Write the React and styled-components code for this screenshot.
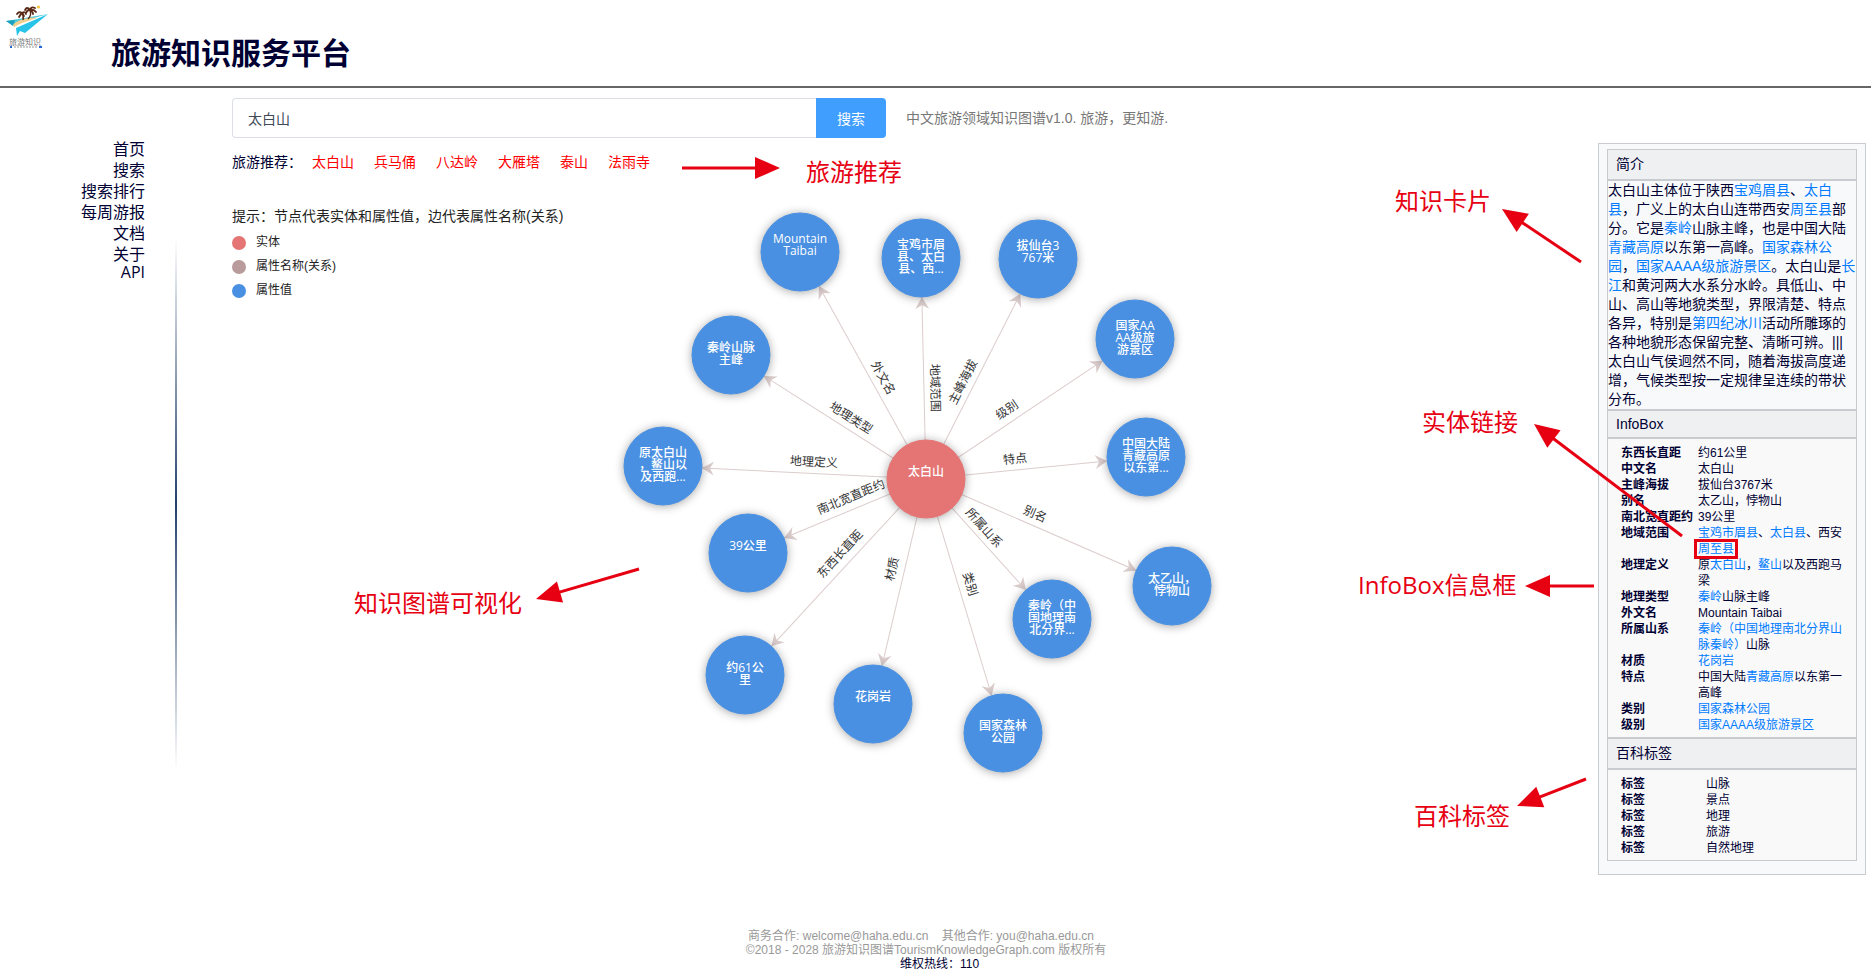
import React from "react";
import styled, { createGlobalStyle, css } from "styled-components";

const ink = "#000033";
const red = "#e60012";
const blue = "#4990e2";
const rose = "#b99b9b";
const coral = "#e57474";
const latinUi = '"Open Sans", "Noto Sans CJK SC", sans-serif';

const GlobalStyle = createGlobalStyle`
  * { box-sizing: border-box; }
  body {
    margin: 0;
    background: #fff;
    color: ${ink};
    font-family: "Liberation Sans", "Noto Sans CJK SC", sans-serif;
    font-size: 14px;
    text-spacing-trim: space-all;
  }
  a { text-decoration: none; }
`;

/* ---------- header ---------- */

const Header = styled.header`
  display: flex;
  align-items: flex-start;
  height: 88px;
  border-bottom: 2px solid #666;
`;

const LogoMark = styled.svg`
  flex: none;
  width: 52px;
  height: 52px;
`;

const LogoText = styled.text`
  font-family: "Noto Sans CJK SC", sans-serif;
  font-size: 8px;
  fill: #777;
`;

const Title = styled.h1`
  margin: 34px 0 0 59px;
  font-size: 30px;
  line-height: 40px;
  font-weight: 700;
`;

function Logo() {
  return (
    <LogoMark viewBox="0 0 52 52" role="img" aria-label="旅游知识">
      <path d="M6 21 L48 14 L27 20 L14 26 Z" fill="#4fc9dd" />
      <path d="M6 21 L15 20 L13 26 Z" fill="#1d9fbe" />
      <path d="M13 25 C18 19 30 17 37 18 L22 23 L14 27 Z" fill="#f3cf8c" />
      <path d="M48 14 L25 33 L20 31 L17 36 L16 28 Z" fill="#27c3e8" />
      <path d="M23 20 Q24 16 22 13 M28 19 Q32 15 30 10" fill="none" stroke="#5b2a16" strokeWidth="1.4" />
      <path
        d="M22 13 Q19 11 17 14 M22 13 Q20 15 19 17 M22 13 Q25 11 26 14 M22 13 Q24 15 24 16 M30 10 Q27 6 25 10 M30 10 Q27 10 26 13 M30 10 Q31 6 35 8 M30 10 Q34 9 36 12 M30 10 Q33 12 33 14"
        fill="none"
        stroke="#5b2a16"
        strokeWidth="1.8"
        strokeLinecap="round"
      />
      <circle cx="38.500" cy="7" r="1.600" fill="#f5c33a" />
      <LogoText x="9" y="45">旅游知识</LogoText>
      <path d="M10 47h2M39 47h3" stroke="#2468d8" strokeWidth="2" />
      <path d="M14 47h23" stroke="#999" strokeWidth="1" strokeDasharray="2 1" />
    </LogoMark>
  );
}

/* ---------- page frame ---------- */

const Columns = styled.div`
  display: grid;
  grid-template-columns: 232px minmax(0, 1fr) 268px;
  padding-right: 5px;
`;

const NavColumn = styled.div`
  display: flex;
  align-items: flex-start;
`;

const Nav = styled.nav`
  display: flex;
  flex-direction: column;
  width: 145px;
  padding-top: 51px;
  text-align: right;
`;

const NavLink = styled.a`
  color: ${ink};
  font-family: ${(p) => (p.$latin ? latinUi : "inherit")};
  font-size: 16px;
  line-height: ${(p) => (p.$latin ? 14 : 21)}px;
`;

const Divider = styled.div`
  width: 2px;
  height: 532px;
  margin: 150px 0 0 30px;
  background: linear-gradient(to bottom, #fff, #23406b 50%, #fff);
`;

const Main = styled.main`
  padding-top: 10px;
`;

/* ---------- search ---------- */

const SearchRow = styled.div`
  display: flex;
  align-items: center;
  gap: 20px;
`;

const SearchForm = styled.form`
  display: flex;
  width: 48%;
  max-width: 654px;
  height: 40px;
`;

const SearchInput = styled.input`
  flex: 1;
  min-width: 0;
  padding: 0 15px;
  border: 1px solid #dcdfe6;
  border-right: 0;
  border-radius: 4px 0 0 4px;
  color: #3d4858;
  font: inherit;
  outline: none;
`;

const SearchButton = styled.button`
  width: 70px;
  border: 0;
  border-radius: 0 4px 4px 0;
  background: #409eff;
  color: #fff;
  font: inherit;
`;

const Tagline = styled.span`
  color: #777;
  line-height: 20px;
`;

const Suggestions = styled.div`
  position: relative;
  display: flex;
  gap: 20px;
  margin-top: 14px;
  line-height: 20px;
`;

const SuggestionTitle = styled.span`
  margin-right: -10px;
`;

const SuggestionLink = styled.a`
  color: #f00;
`;

/* ---------- graph ---------- */

const Stage = styled.section`
  display: grid;
  margin-top: 33px;
  color: #222;
`;

const Legend = styled.div`
  grid-area: 1 / 1;
  justify-self: start;
`;

const Hint = styled.p`
  margin: 1px 0 5px;
  line-height: 20px;
`;

const LegendItem = styled.div`
  display: flex;
  align-items: center;
  gap: 10px;
  height: 24px;
  font-size: 12px;
  line-height: 20px;
`;

const Dot = styled.span`
  width: 14px;
  height: 14px;
  border-radius: 50%;
  background: ${(p) => p.$color};
`;

const LegendLabel = styled.span`
  padding-bottom: 2px;
`;

const GraphFrame = styled.div`
  position: relative;
  grid-area: 1 / 1;
  justify-self: center;
`;

const GraphSvg = styled.svg`
  display: block;
  width: 620px;
  height: 580px;
  font-family: ${latinUi};
  font-size: 12px;
`;

const NodeCircle = styled.circle`
  fill: ${(p) => p.$color};
  stroke: ${(p) => p.$color};
  filter: drop-shadow(0 1px 5px rgba(0, 0, 0, 0.35));
`;

const NodeText = styled.text`
  fill: #fff;
  font-weight: 500;
  text-anchor: middle;
`;

const EdgeText = styled.text`
  fill: #333;
  text-anchor: middle;
`;

const center = { x: 321, y: 274, lines: ["太白山", ""] };

const nodes = [
  { x: 195, y: 47, lines: ["Mountain", "Taibai", ""], edge: "外文名", lx: 278, ly: 173 },
  { x: 316, y: 53, lines: ["宝鸡市眉", "县、太白", "县、西..."], edge: "地域范围", lx: 330, ly: 183 },
  { x: 433, y: 54, lines: ["拔仙台3", "767米", ""], edge: "主峰海拔", lx: 358, ly: 177 },
  { x: 530, y: 134, lines: ["国家AA", "AA级旅", "游景区"], edge: "级别", lx: 402, ly: 205 },
  { x: 541, y: 252, lines: ["中国大陆", "青藏高原", "以东第..."], edge: "特点", lx: 410, ly: 254 },
  { x: 567, y: 381, lines: ["太乙山，", "悖物山"], edge: "别名", lx: 430, ly: 309 },
  { x: 447, y: 414, lines: ["秦岭（中", "国地理南", "北分界..."], edge: "所属山系", lx: 379, ly: 323 },
  { x: 398, y: 528, lines: ["国家森林", "公园"], edge: "类别", lx: 365, ly: 379 },
  { x: 268, y: 499, lines: ["花岗岩", ""], edge: "材质", lx: 287, ly: 364 },
  { x: 140, y: 470, lines: ["约61公", "里"], edge: "东西长直距", lx: 235, ly: 349 },
  { x: 143, y: 348, lines: ["39公里", ""], edge: "南北宽直距约", lx: 246, ly: 292 },
  { x: 58, y: 261, lines: ["原太白山", "，鳌山以", "及西跑..."], edge: "地理定义", lx: 209, ly: 257 },
  { x: 126, y: 150, lines: ["秦岭山脉", "主峰"], edge: "地理类型", lx: 246, ly: 213 },
];

const RADIUS = 39;

function GraphNode({ node, color }) {
  const first = node.y - (node.lines.length - 1) * 6 + 3;
  return (
    <g>
      <NodeCircle cx={node.x} cy={node.y} r={RADIUS} $color={color} />
      {node.lines.map((line, i) => (
        <NodeText key={i} x={node.x} y={first + i * 12}>
          {line}
        </NodeText>
      ))}
    </g>
  );
}

function GraphEdge({ node }) {
  const angle = Math.atan2(node.y - center.y, node.x - center.x);
  const deg = (angle * 180) / Math.PI;
  const upright = deg > 90 ? deg - 180 : deg < -91 ? deg + 180 : deg;
  const length = Math.hypot(node.y - center.y, node.x - center.x) - RADIUS;
  const textAngle = upright < -85 ? upright + 180 : upright;
  return (
    <g>
      <g transform={`translate(${center.x} ${center.y}) rotate(${deg})`} opacity="0.5">
        <path d={`M0 0H${length}`} stroke={rose} />
        <path transform={`translate(${length} 0)`} d="M0 0L-12 7L-8 0L-12 -7Z" fill={rose} />
      </g>
      <EdgeText transform={`translate(${node.lx} ${node.ly}) rotate(${textAngle})`} dy="4">
        {node.edge}
      </EdgeText>
    </g>
  );
}

/* ---------- red callouts ---------- */

const CalloutLayer = styled.svg`
  position: absolute;
  z-index: 2;
  overflow: visible;
  pointer-events: none;
  font-family: ${latinUi};
  font-size: 24px;
  fill: ${red};
  ${(p) =>
    p.$place === "suggestions" &&
    css`
      left: 450px;
      top: -10px;
      width: 230px;
      height: 50px;
    `}
  ${(p) =>
    p.$place === "graph" &&
    css`
      left: -260px;
      top: 355px;
      width: 300px;
      height: 60px;
    `}
  ${(p) =>
    p.$place === "card" &&
    css`
      right: 0;
      top: 0;
      width: 520px;
      height: 732px;
    `}
`;

function Arrow({ from, to }) {
  const dx = to[0] - from[0];
  const dy = to[1] - from[1];
  const length = Math.hypot(dx, dy);
  const deg = (Math.atan2(dy, dx) * 180) / Math.PI;
  return (
    <g transform={`translate(${from[0]} ${from[1]}) rotate(${deg})`}>
      <path d={`M0 0H${length - 20}`} stroke={red} strokeWidth="3" />
      <path d={`M${length} 0l-25 -11v22z`} />
    </g>
  );
}

/* ---------- knowledge card ---------- */

const CardColumn = styled.aside`
  position: relative;
  align-self: start;
  margin-top: 55px;
`;

const Card = styled.div`
  padding: 5px 8px 13px;
  border: 1px solid #c8ccd1;
  background: #f8f9fa;
`;

const CardHeading = styled.h2`
  margin: 0;
  padding-left: 8px;
  border: 1px solid #c8ccd1;
  background: #eff0f2;
  font-size: 14px;
  font-weight: 400;
  line-height: ${(p) => (p.$compact ? 26 : 29)}px;
`;

const Summary = styled.p`
  margin: 0;
  border: 1px solid #c8ccd1;
  line-height: 19px;
`;

const FactBox = styled.div`
  padding: 6px 8px 4px 13px;
  border: 1px solid #c8ccd1;
  background: #f9f9f9;
`;

const Facts = styled.table`
  width: 100%;
  table-layout: fixed;
  border-collapse: collapse;
  font-size: 12px;
  line-height: 16px;
`;

const FactName = styled.th`
  width: ${(p) => p.$width}px;
  padding: 0;
  text-align: left;
  vertical-align: top;
  font-weight: 700;
  white-space: nowrap;
`;

const FactValue = styled.td`
  padding: 0;
  vertical-align: top;
`;

const EntityLink = styled.a`
  color: #007bff;
  ${(p) =>
    p.$marked &&
    css`
      margin: 0 -1px;
      padding: 0 1px;
      outline: 3px solid ${red};
    `}
`;

const E = ({ children, marked }) => (
  <EntityLink href="#entity" $marked={marked}>
    {children}
  </EntityLink>
);

const facts = [
  ["东西长直距", "约61公里"],
  ["中文名", "太白山"],
  ["主峰海拔", "拔仙台3767米"],
  ["别名", "太乙山，悖物山"],
  ["南北宽直距约", "39公里"],
  ["地域范围", <><E>宝鸡市眉县</E>、<E>太白县</E>、西安<E marked>周至县</E></>],
  ["地理定义", <>原<E>太白山</E>，<E>鳌山</E>以及西跑马梁</>],
  ["地理类型", <><E>秦岭</E>山脉主峰</>],
  ["外文名", "Mountain Taibai"],
  ["所属山系", <><E>秦岭（中国地理南北分界山脉秦岭）</E>山脉</>],
  ["材质", <E>花岗岩</E>],
  ["特点", <>中国大陆<E>青藏高原</E>以东第一高峰</>],
  ["类别", <E>国家森林公园</E>],
  ["级别", <E>国家AAAA级旅游景区</E>],
];

const tags = ["山脉", "景点", "地理", "旅游", "自然地理"].map((t) => ["标签", t]);

function FactTable({ rows, nameWidth }) {
  return (
    <FactBox>
      <Facts>
        <tbody>
          {rows.map(([name, value], i) => (
            <tr key={i}>
              <FactName scope="row" $width={nameWidth}>{name}</FactName>
              <FactValue>{value}</FactValue>
            </tr>
          ))}
        </tbody>
      </Facts>
    </FactBox>
  );
}

/* ---------- footer ---------- */

const Footer = styled.footer`
  margin-top: 54px;
  padding: 0 19px 5px 0;
  text-align: center;
  font-size: 12px;
  line-height: 14px;
  color: #999;
`;

const FooterLine = styled.div`
  white-space: pre;
`;

const Contacts = styled(FooterLine)`
  padding-right: 10px;
`;

const Hotline = styled(FooterLine)`
  padding-left: 27px;
  color: ${ink};
`;

export default function App() {
  return (
    <>
      <GlobalStyle />
      <Header>
        <Logo />
        <Title>旅游知识服务平台</Title>
      </Header>

      <Columns>
        <NavColumn>
          <Nav>
            {["首页", "搜索", "搜索排行", "每周游报", "文档", "关于"].map((item) => (
              <NavLink key={item} href="#nav">{item}</NavLink>
            ))}
            <NavLink href="#api" $latin>API</NavLink>
          </Nav>
          <Divider />
        </NavColumn>

        <Main>
          <SearchRow>
            <SearchForm onSubmit={(e) => e.preventDefault()}>
              <SearchInput aria-label="搜索" defaultValue="太白山" />
              <SearchButton type="submit">搜索</SearchButton>
            </SearchForm>
            <Tagline>中文旅游领域知识图谱v1.0. 旅游，更知游.</Tagline>
          </SearchRow>

          <Suggestions>
            <SuggestionTitle>旅游推荐：</SuggestionTitle>
            {["太白山", "兵马俑", "八达岭", "大雁塔", "泰山", "法雨寺"].map((item) => (
              <SuggestionLink key={item} href="#search">{item}</SuggestionLink>
            ))}
            <CalloutLayer $place="suggestions">
              <Arrow from={[0, 26]} to={[98, 26]} />
              <text x="124" y="39">旅游推荐</text>
            </CalloutLayer>
          </Suggestions>

          <Stage>
            <Legend>
              <Hint>提示：节点代表实体和属性值，边代表属性名称(关系)</Hint>
              <LegendItem><Dot $color={coral} /><LegendLabel>实体</LegendLabel></LegendItem>
              <LegendItem><Dot $color={rose} /><LegendLabel>属性名称(关系)</LegendLabel></LegendItem>
              <LegendItem><Dot $color={blue} /><LegendLabel>属性值</LegendLabel></LegendItem>
            </Legend>
            <GraphFrame>
              <GraphSvg viewBox="0 0 620 580">
                {nodes.map((n) => <GraphEdge key={n.edge} node={n} />)}
                {nodes.map((n) => <GraphNode key={n.edge} node={n} color={blue} />)}
                <GraphNode node={center} color={coral} />
              </GraphSvg>
              <CalloutLayer $place="graph">
                <text x="9" y="52">知识图谱可视化</text>
                <Arrow from={[294, 9]} to={[191, 39]} />
              </CalloutLayer>
            </GraphFrame>
          </Stage>
        </Main>

        <CardColumn>
          <Card>
            <CardHeading>简介</CardHeading>
            <Summary>
              太白山主体位于陕西<E>宝鸡眉县</E>、<E>太白县</E>，广义上的太白山连带西安<E>周至县</E>部分。它是<E>秦岭</E>山脉主峰，也是中国大陆<E>青藏高原</E>以东第一高峰。<E>国家森林公园</E>，<E>国家AAAA级旅游景区</E>。太白山是<E>长江</E>和黄河两大水系分水岭。具低山、中山、高山等地貌类型，界限清楚、特点各异，特别是<E>第四纪冰川</E>活动所雕琢的各种地貌形态保留完整、清晰可辨。||| 太白山气侯迥然不同，随着海拔高度递增，气候类型按一定规律呈连续的带状分布。
            </Summary>
            <CardHeading $compact>InfoBox</CardHeading>
            <FactTable rows={facts} nameWidth={77} />
            <CardHeading>百科标签</CardHeading>
            <FactTable rows={tags} nameWidth={85} />
          </Card>
          <CalloutLayer $place="card">
            <text x="49" y="67">知识卡片</text>
            <Arrow from={[235, 119]} to={[156, 66]} />
            <text x="76" y="288">实体链接</text>
            <Arrow from={[336, 393]} to={[188, 281]} />
            <text x="12" y="451">InfoBox信息框</text>
            <Arrow from={[248, 443]} to={[179, 443]} />
            <text x="68" y="682">百科标签</text>
            <Arrow from={[240, 636]} to={[171, 663]} />
          </CalloutLayer>
        </CardColumn>
      </Columns>

      <Footer>
        <Contacts>{"商务合作: welcome@haha.edu.cn    其他合作: you@haha.edu.cn"}</Contacts>
        <FooterLine>©2018 - 2028 旅游知识图谱TourismKnowledgeGraph.com 版权所有</FooterLine>
        <Hotline>维权热线：110</Hotline>
      </Footer>
    </>
  );
}
